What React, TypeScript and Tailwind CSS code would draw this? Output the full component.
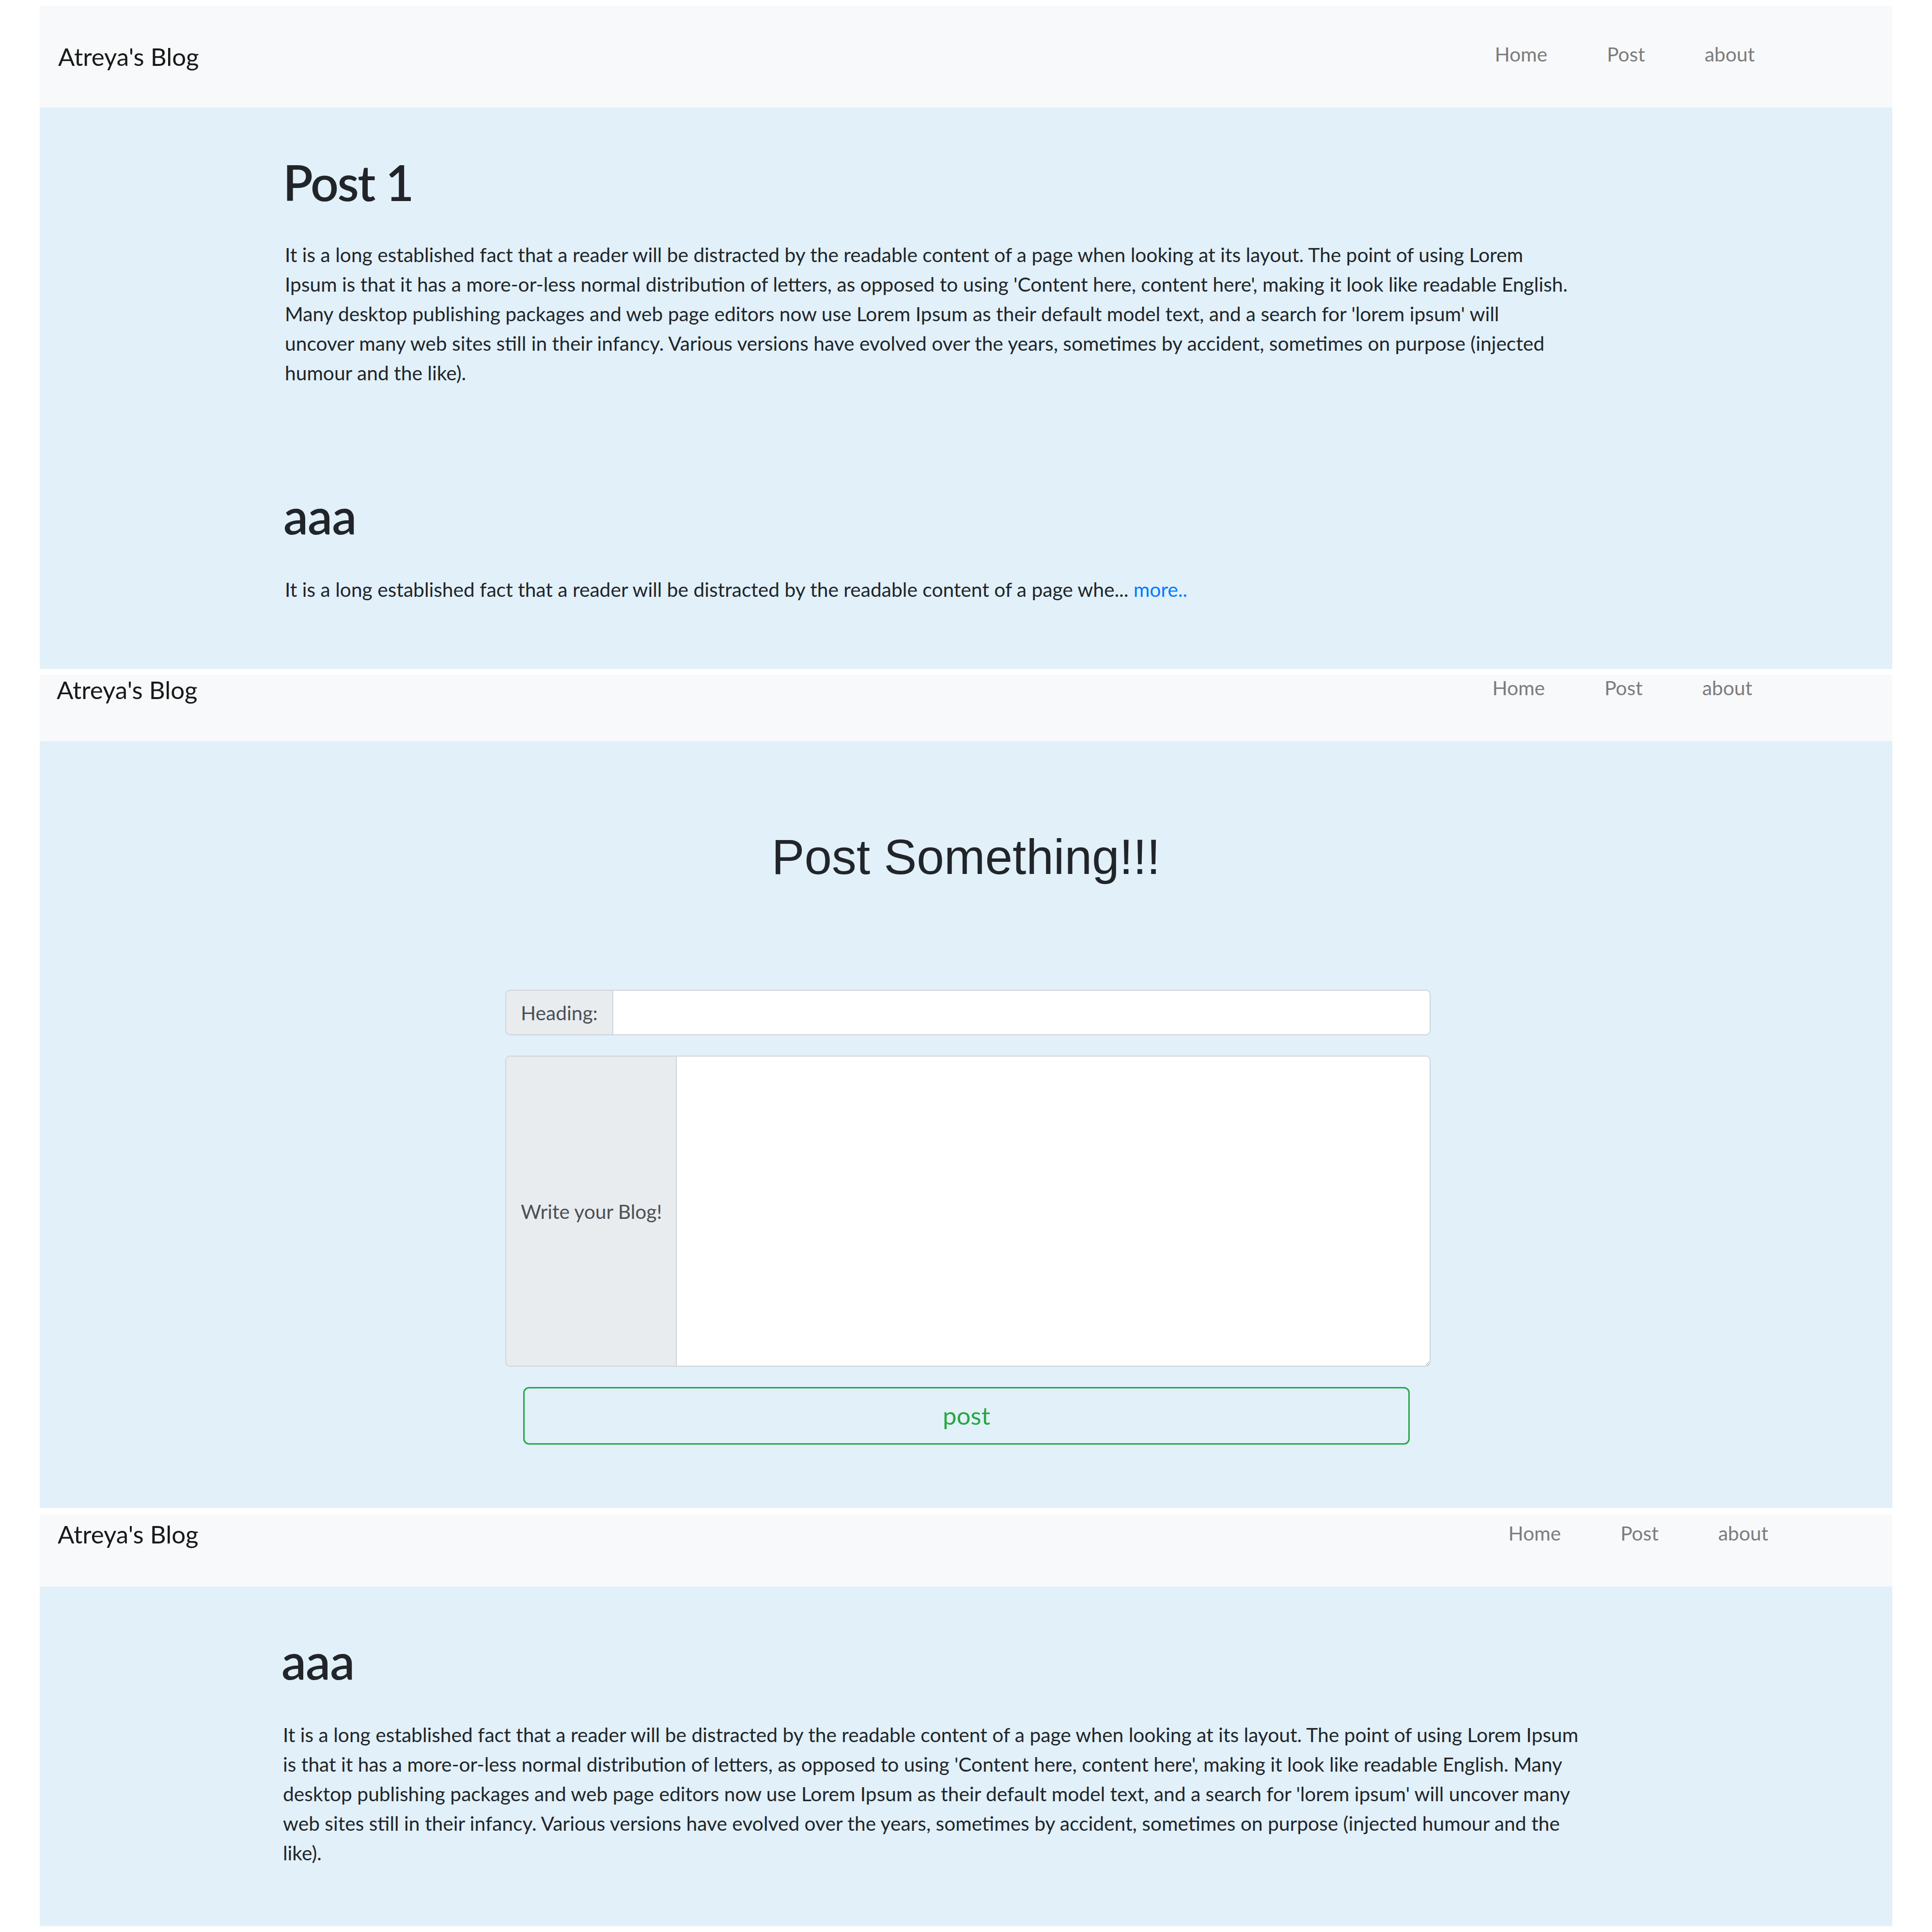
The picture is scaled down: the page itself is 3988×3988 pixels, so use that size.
const LOREM =
  "It is a long established fact that a reader will be distracted by the readable content of a page when looking at its layout. The point of using Lorem Ipsum is that it has a more-or-less normal distribution of letters, as opposed to using 'Content here, content here', making it look like readable English. Many desktop publishing packages and web page editors now use Lorem Ipsum as their default model text, and a search for 'lorem ipsum' will uncover many web sites still in their infancy. Various versions have evolved over the years, sometimes by accident, sometimes on purpose (injected humour and the like).";

interface NavbarProps {
  className: string;
  brandClass: string;
  linksClass: string;
}

function Navbar({ className, brandClass, linksClass }: NavbarProps) {
  return (
    <nav className={`flex bg-[#f8f9fa] ${className}`}>
      <a className={`text-[51px] text-[#191919] whitespace-nowrap ${brandClass}`}>Atreya's Blog</a>
      <ul className={`ml-auto flex gap-[123px] text-[40.7px] text-[#7c7c7d] ${linksClass}`}>
        <li>Home</li>
        <li>Post</li>
        <li>about</li>
      </ul>
    </nav>
  );
}

function PostForm() {
  return (
    <div className="flex flex-col items-center ml-[8px]">
      {/* heading input group */}
      <div className="flex w-[1910px] h-[94px] border-2 border-[#ced4da] rounded-[10px] overflow-hidden">
        <label className="w-[221px] flex items-center px-[30px] bg-[#e9ecef] border-r-2 border-[#ced4da] text-[40.7px] text-[#495057]">
          Heading:
        </label>
        <input type="text" className="flex-1 bg-white outline-none px-[30px] text-[40.7px]" />
      </div>

      {/* body textarea group */}
      <div className="flex w-[1910px] h-[642px] mt-[42px] border-2 border-[#ced4da] rounded-[10px] overflow-hidden">
        <label className="w-[352px] flex items-center px-[30px] bg-[#e9ecef] border-r-2 border-[#ced4da] text-[40.7px] text-[#495057] whitespace-nowrap">
          Write your Blog!
        </label>
        <textarea className="flex-1 bg-white outline-none p-[30px] text-[40.7px] resize" />
      </div>

      <button
        type="button"
        className="mt-[42px] w-[1830px] h-[119px] -ml-[6px] border-[3px] border-[#28a745] rounded-[12px] text-[51px] text-[#28a745] bg-transparent"
      >
        post
      </button>
    </div>
  );
}

export default function App() {
  return (
    <div className="w-[3988px] h-[3988px] bg-white px-[82px] pt-[12px] font-['Lato','Open_Sans',sans-serif] text-[#212529]">
      {/* page 1: post list */}
      <section>
        <Navbar
          className="h-[210px] items-center pl-[38px]"
          brandClass="leading-[1.5]"
          linksClass="leading-[1.5] mb-[10px] mr-[284px]"
        />
        <div className="h-[1159px] bg-[#e1f0f9] pl-[506px] pt-[93px]">
          <h1 className="-ml-[4px] text-[101.7px] leading-[1.2] font-semibold tracking-[-0.025em]">Post 1</h1>
          <p className="mt-[58px] w-[2654px] text-[40.7px] leading-[61px]">{LOREM}</p>
          <h1 className="-ml-[3px] mt-[203px] text-[101.7px] leading-[1.2] font-semibold tracking-[-0.01em]">aaa</h1>
          <p className="mt-[61px] text-[40.7px] leading-[61px]">
            It is a long established fact that a reader will be distracted by the readable content of a page whe...{' '}
            <a className="text-[#007bff]">more..</a>
          </p>
        </div>
      </section>

      {/* page 2: new post form */}
      <section className="mt-[12px]">
        <Navbar
          className="h-[137px] items-start pl-[35px]"
          brandClass="leading-[1.2]"
          linksClass="leading-[1.2] pt-[3px] mr-[289px]"
        />
        <div className="h-[1583px] bg-[#e1f0f9] pt-[178px]">
          <h1 className="text-center text-[101.7px] leading-[1.2] font-normal font-['Liberation_Sans',Arial,sans-serif]">
            Post Something!!!
          </h1>
          <div className="mt-[213px]">
            <PostForm />
          </div>
        </div>
      </section>

      {/* page 3: single post */}
      <section className="mt-[13px]">
        <Navbar
          className="h-[149px] items-start pl-[37px]"
          brandClass="leading-[1.5] pt-[3px]"
          linksClass="leading-[1.5] pt-[8px] mr-[256px]"
        />
        <div className="h-[701px] bg-[#e1f0f9] pl-[502px] pt-[92px]">
          <h1 className="-ml-[3px] text-[101.7px] leading-[1.2] font-semibold tracking-[-0.01em]">aaa</h1>
          <p className="mt-[61px] w-[2711px] text-[40.7px] leading-[61px]">{LOREM}</p>
        </div>
      </section>
    </div>
  );
}
